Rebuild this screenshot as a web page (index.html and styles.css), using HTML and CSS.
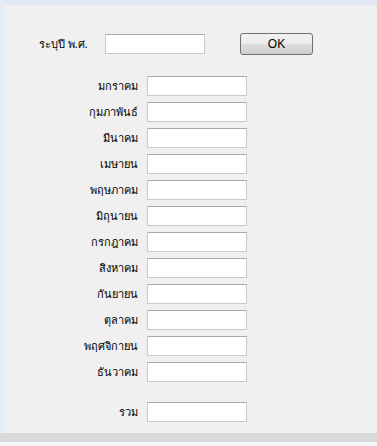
FILE: index.html
```html
<!DOCTYPE html>
<html lang="th">

<head>
  <meta charset="UTF-8">
  <meta name="viewport" content="width=device-width, initial-scale=1.0">
  <title>ยอดรายเดือน</title>

  <link rel="stylesheet" href="styles.css">
</head>

<body>
  <div class="window">
    <main class="client">
      <div class="year-row">
        <label class="year-label" for="year">ระบุปี พ.ศ.</label>
        <input class="box" id="year" />
        <button class="ok-btn">OK</button>
      </div>

      <section class="months">
        <label>มกราคม</label><input class="box" />
        <label>กุมภาพันธ์</label><input class="box" />
        <label>มีนาคม</label><input class="box" />
        <label>เมษายน</label><input class="box" />
        <label>พฤษภาคม</label><input class="box" />
        <label>มิถุนายน</label><input class="box" />
        <label>กรกฎาคม</label><input class="box" />
        <label>สิงหาคม</label><input class="box" />
        <label>กันยายน</label><input class="box" />
        <label>ตุลาคม</label><input class="box" />
        <label>พฤศจิกายน</label><input class="box" />
        <label>ธันวาคม</label><input class="box" />
      </section>

      <section class="months total">
        <label>รวม</label><input class="box" />
      </section>
    </main>
    <div class="status-bar"></div>
  </div>
</body>

</html>
```

FILE: styles.css
```css
html,
body {
  margin: 0;
  height: 100%;
}

body {
  background: #f7f7f7;
  font-family: Tahoma, "Noto Sans", sans-serif;
  font-size: 11px;
  color: #000;
}

.window {
  border-top: 5px solid #dfe8f4;
  border-left: 5px solid #e6edf6;
  background: #f0f0f0;
}

.client {
  height: 428px;
  box-sizing: border-box;
  padding-top: 28px;
}

.year-row {
  display: flex;
  align-items: center;
  height: 22px;
}

.year-label {
  width: 66px;
  margin-left: 34px;
}

.box {
  width: 100px;
  height: 20px;
  box-sizing: border-box;
  border: 1px solid #c9c9c9;
  border-top-color: #a9a9a9;
  background: #fff;
  margin: 0;
  padding: 0 3px;
  font: inherit;
}

.ok-btn {
  margin-left: 35px;
  width: 73px;
  height: 22px;
  border: 1px solid #707070;
  border-radius: 3px;
  background: linear-gradient(#f2f2f2 0%, #ebebeb 50%, #dddddd 51%, #cfcfcf 100%);
  font-family: Tahoma, "Liberation Sans", sans-serif;
  font-size: 12px;
  padding: 0;
}

.months {
  display: grid;
  grid-template-columns: 133px 100px;
  grid-auto-rows: 20px;
  column-gap: 9px;
  row-gap: 6px;
  align-items: center;
  margin-top: 21px;
}

.months label {
  text-align: right;
}

.months.total {
  margin-top: 20px;
}

.status-bar {
  height: 9px;
  background: #d9d9db;
  margin-left: -5px;
}
```
